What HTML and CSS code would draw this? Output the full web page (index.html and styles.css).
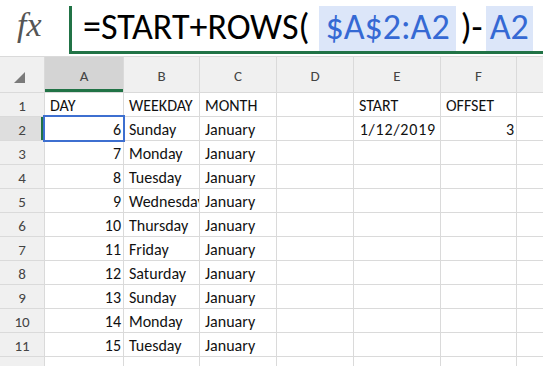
FILE: index.html
```html
<!DOCTYPE html>
<html lang="en">

<head>
    <meta charset="UTF-8">
    <meta name="viewport" content="width=device-width, initial-scale=1.0">
    <title>ROWS formula</title>
    <link rel="stylesheet" href="styles.css">
</head>

<body>
    <div class="formula-bar">
        <div class="fx">fx</div>
        <div class="formula">=START+ROWS(<span class="ref">$A$2:A2</span><span class="close">)-</span><span class="ref ref-last">A2</span></div>
    </div>

    <div class="sheet">
        <!-- column headers -->
        <div class="corner"><span class="tri"></span></div>
        <div class="ch sel-col">A</div>
        <div class="ch">B</div>
        <div class="ch">C</div>
        <div class="ch">D</div>
        <div class="ch">E</div>
        <div class="ch">F</div>
        <div class="ch"></div>

        <div class="rh">1</div>
        <div class="c">DAY</div>
        <div class="c">WEEKDAY</div>
        <div class="c">MONTH</div>
        <div class="c"></div>
        <div class="c">START</div>
        <div class="c">OFFSET</div>
        <div class="c"></div>

        <div class="rh sel-row">2</div>
        <div class="c num active">6</div>
        <div class="c">Sunday</div>
        <div class="c">January</div>
        <div class="c"></div>
        <div class="c num date">1/12/2019</div>
        <div class="c num">3</div>
        <div class="c"></div>

        <div class="rh">3</div>
        <div class="c num">7</div>
        <div class="c">Monday</div>
        <div class="c">January</div>
        <div class="c"></div>
        <div class="c"></div>
        <div class="c"></div>
        <div class="c"></div>

        <div class="rh">4</div>
        <div class="c num">8</div>
        <div class="c">Tuesday</div>
        <div class="c">January</div>
        <div class="c"></div>
        <div class="c"></div>
        <div class="c"></div>
        <div class="c"></div>

        <div class="rh">5</div>
        <div class="c num">9</div>
        <div class="c">Wednesday</div>
        <div class="c">January</div>
        <div class="c"></div>
        <div class="c"></div>
        <div class="c"></div>
        <div class="c"></div>

        <div class="rh">6</div>
        <div class="c num">10</div>
        <div class="c">Thursday</div>
        <div class="c">January</div>
        <div class="c"></div>
        <div class="c"></div>
        <div class="c"></div>
        <div class="c"></div>

        <div class="rh">7</div>
        <div class="c num">11</div>
        <div class="c">Friday</div>
        <div class="c">January</div>
        <div class="c"></div>
        <div class="c"></div>
        <div class="c"></div>
        <div class="c"></div>

        <div class="rh">8</div>
        <div class="c num">12</div>
        <div class="c">Saturday</div>
        <div class="c">January</div>
        <div class="c"></div>
        <div class="c"></div>
        <div class="c"></div>
        <div class="c"></div>

        <div class="rh">9</div>
        <div class="c num">13</div>
        <div class="c">Sunday</div>
        <div class="c">January</div>
        <div class="c"></div>
        <div class="c"></div>
        <div class="c"></div>
        <div class="c"></div>

        <div class="rh">10</div>
        <div class="c num">14</div>
        <div class="c">Monday</div>
        <div class="c">January</div>
        <div class="c"></div>
        <div class="c"></div>
        <div class="c"></div>
        <div class="c"></div>

        <div class="rh">11</div>
        <div class="c num">15</div>
        <div class="c">Tuesday</div>
        <div class="c">January</div>
        <div class="c"></div>
        <div class="c"></div>
        <div class="c"></div>
        <div class="c"></div>

        <div class="rh">12</div>
        <div class="c"></div>
        <div class="c"></div>
        <div class="c"></div>
        <div class="c"></div>
        <div class="c"></div>
        <div class="c"></div>
        <div class="c"></div>
    </div>
</body>

</html>
```

FILE: styles.css
```css
body {
    margin: 0;
    background: #fff;
    font-family: Carlito, Lato, "Open Sans", sans-serif;
    overflow: hidden;
}

.formula-bar {
    display: flex;
    height: 56px;
    background: #fff;
}

.fx {
    width: 69px;
    box-sizing: border-box;
    padding: 5px 0 0 17px;
    font-family: "Liberation Serif", serif;
    font-style: italic;
    font-size: 34px;
    line-height: 40px;
    color: #555;
}

.formula {
    flex: 1;
    display: flex;
    box-sizing: border-box;
    height: 48px;
    margin-top: 6px;
    padding-left: 11px;
    border-left: 3px solid #217346;
    border-bottom: 3px solid #217346;
    font-size: 36px;
    line-height: 42px;
    color: #000;
    white-space: nowrap;
    overflow: hidden;
}

.ref {
    background: #dce6f9;
    color: #3569d4;
    padding: 0 6px;
    margin-left: 10px;
}

.ref-last {
    margin-left: 3px;
    padding: 0 4px;
}

.close {
    margin-left: 5px;
}

/* grid */
.sheet {
    display: grid;
    grid-template-columns: 44px 78px 75px 76px 76px 86px 75px 1fr;
    grid-template-rows: 35px;
    grid-auto-rows: 23px;
    gap: 1px;
    background: #dadada;
    border-top: 1px solid #dadada;
}

.corner,
.ch,
.rh {
    background: #f0f0f0;
    color: #444;
    font-size: 15px;
    display: flex;
    align-items: center;
    justify-content: center;
}

.corner {
    justify-content: flex-start;
    align-items: flex-end;
    padding: 0 0 9px 14px;
}

.tri {
    width: 0;
    height: 0;
    border-left: 11px solid transparent;
    border-bottom: 11px solid #7a7a7a;
}

.ch {
    padding-top: 2px;
}

.sel-col {
    background: #d4d4d4;
    box-shadow: inset 0 -3px #217346;
}

.rh {
    padding-top: 3px;
}

.sel-row {
    background: #dedede;
    box-shadow: inset -3px 0 #217346;
}

.c {
    background: #fff;
    font-size: 16px;
    line-height: 18px;
    color: #111;
    padding: 0 3px 1px 5px;
    display: flex;
    align-items: flex-end;
    white-space: nowrap;
    overflow: hidden;
}

.num {
    justify-content: flex-end;
    padding-right: 2px;
}

.date {
    letter-spacing: 0.8px;
    padding-right: 4px;
}

.active {
    outline: 2px solid #3d6fd0;
    position: relative;
    z-index: 1;
}
```
